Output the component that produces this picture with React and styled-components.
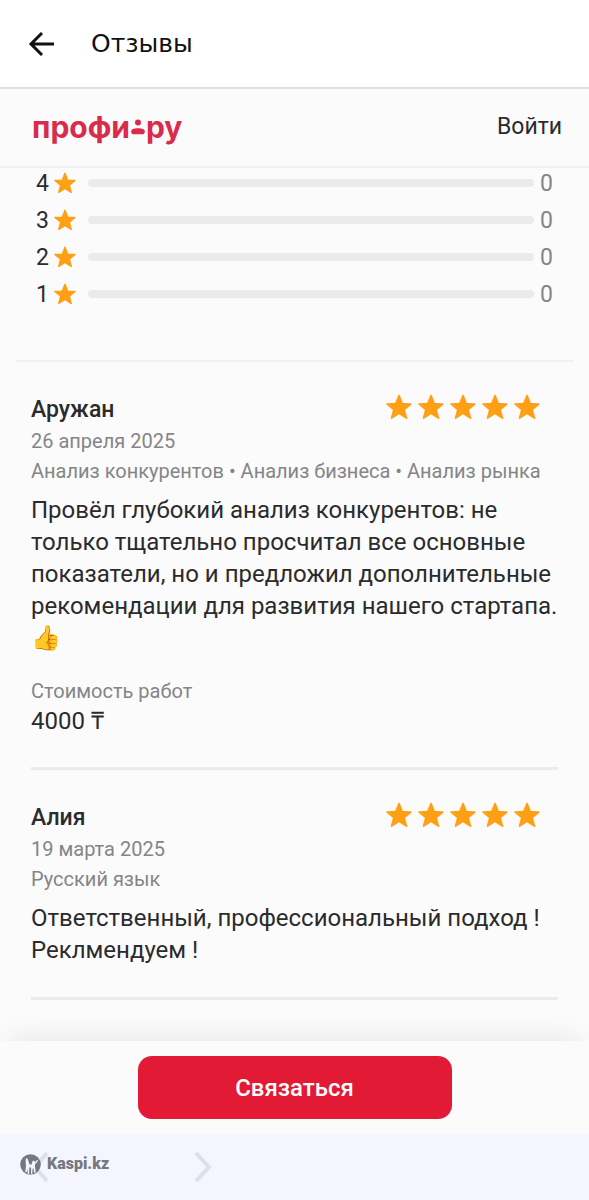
import React from "react"
import styled, { createGlobalStyle } from "styled-components"

const colors = {
  text: "#2b2b2d",
  muted: "#858587",
  star: "#ff9f14",
  red: "#e31a35",
  logo: "#d92b4b",
  page: "#fbfbfb",
  line: "#ebebeb",
}

const GlobalStyle = createGlobalStyle`
  * {
    box-sizing: border-box;
  }
  body {
    margin: 0;
    background: ${colors.page};
    color: ${colors.text};
    font-family: Roboto, "Liberation Sans", sans-serif;
  }
  h1, h2, p, ul, dl, dd {
    margin: 0;
    padding: 0;
  }
`

const Page = styled.div`
  display: flex;
  flex-direction: column;
  min-height: 100vh;
`

const AppBar = styled.header`
  display: flex;
  align-items: center;
  gap: 34px;
  height: 89px;
  padding: 0 26px;
  background: #fff;
  border-bottom: 2px solid #dddee2;
`

const IconButton = styled.button`
  display: flex;
  padding: 0;
  border: 0;
  background: none;
  color: #111;
  cursor: pointer;
`

const Title = styled.h1`
  font-family: "DejaVu Sans", sans-serif;
  font-size: 25px;
  font-weight: 400;
  line-height: 32px;
  color: #111;
`

const SiteHeader = styled.div`
  display: flex;
  justify-content: space-between;
  align-items: center;
  height: 79px;
  padding: 0 27px 2px 32px;
  border-bottom: 2px solid #f0f0f1;
`

const Logo = styled.a`
  display: flex;
  align-items: center;
  gap: 1px;
  font-family: Inter, sans-serif;
  font-size: 30px;
  font-weight: 700;
  line-height: 32px;
  color: ${colors.logo};
  text-decoration: none;
`

const LoginLink = styled.a`
  font-size: 23px;
  line-height: 32px;
  color: ${colors.text};
  text-decoration: none;
`

const Content = styled.main`
  flex: 1;
`

const Ratings = styled.ul`
  display: flex;
  flex-direction: column;
  gap: 7px;
  && {
    padding: 0 36px 51px;
  }
  list-style: none;
`

const RatingRow = styled.li`
  display: flex;
  align-items: center;
  height: 30px;
  font-size: 23px;
`

const RatingValue = styled.span`
  width: 18px;
`

const RatingTrack = styled.div`
  flex: 1;
  height: 8px;
  margin: 0 6px 0 12px;
  border-radius: 4px;
  background: ${colors.line};
  overflow: hidden;
`

const RatingFill = styled.div`
  height: 100%;
  background: ${colors.star};
`

const RatingCount = styled.span`
  color: ${colors.muted};
`

const Reviews = styled.section`
  margin: 0 16px;
  padding: 0 15px;
  border-top: 2px solid #f0f0f1;
`

const Review = styled.article`
  padding: 32px 0 31px;
  border-bottom: 3px solid ${colors.line};
`

const ReviewHead = styled.div`
  display: flex;
  justify-content: space-between;
  align-items: flex-start;
  padding-right: 18px;
`

const Author = styled.h2`
  font-size: 23px;
  font-weight: 500;
  line-height: 32px;
`

const Stars = styled.div`
  display: flex;
  gap: 6px;
`

const Meta = styled.p`
  font-size: 20px;
  line-height: 30px;
  color: ${colors.muted};
`

const Text = styled.p`
  margin-top: 8px;
  font-size: 24px;
  line-height: 32px;
`

const Price = styled.dl`
  margin-top: 22px;
`

const PriceLabel = styled.dt`
  font-size: 20px;
  line-height: 30px;
  color: ${colors.muted};
`

const PriceValue = styled.dd`
  font-size: 24px;
  line-height: 30px;
`

const Footer = styled.footer`
  position: sticky;
  bottom: 0;
`

const ActionBar = styled.div`
  display: flex;
  justify-content: center;
  padding: 15px 16px;
  background: ${colors.page};
  box-shadow: 0 -10px 30px -10px rgba(0, 0, 0, 0.1);
`

const ContactButton = styled.button`
  width: 314px;
  height: 63px;
  border: 0;
  border-radius: 14px;
  background: ${colors.red};
  color: #fff;
  font-family: inherit;
  font-size: 24px;
  font-weight: 500;
  cursor: pointer;
`

const BrowserBar = styled.nav`
  position: relative;
  display: flex;
  align-items: center;
  gap: 141px;
  height: 66px;
  padding: 0 32px;
  background: #f4f5fe;
`

const NavButton = styled(IconButton)`
  color: #dedfe8;
`

const Watermark = styled.div`
  position: absolute;
  left: 20px;
  top: 19px;
  display: flex;
  align-items: center;
  gap: 6px;
  font-size: 16px;
  font-weight: 900;
  line-height: 22px;
  color: #77787d;
`

function Star({ size }) {
  return (
    <svg width={size} height={size} viewBox="0 0 24 24" aria-hidden="true">
      <path
        d="M12 1.4 14.9 8.9 22.9 9.3 16.7 14.4 18.8 22.2 12 17.8 5.2 22.2 7.3 14.4 1.1 9.3 9.1 8.9Z"
        fill={colors.star}
        stroke={colors.star}
        strokeWidth="1.6"
        strokeLinejoin="round"
      />
    </svg>
  )
}

function BackIcon() {
  return (
    <svg width="31" height="30" viewBox="0 0 31 30" fill="none">
      <path
        d="M28 15H5M16 4 5 15l11 11"
        stroke="currentColor"
        strokeWidth="3"
      />
    </svg>
  )
}

function PersonMark() {
  return (
    <svg width="14" height="16" viewBox="0 0 14 16" aria-hidden="true">
      <circle cx="7" cy="3.5" r="3" fill="currentColor" />
      <path
        d="M.2 12.400C.2 10 2.500 9.200 7 9.200s6.800.8 6.800 3.200c0 1.900-1.100 2.900-2.800 2.900H3C1.300 15.300.2 14.300.2 12.400Z"
        fill="currentColor"
      />
    </svg>
  )
}

function Chevron({ direction }) {
  return (
    <svg width="20" height="34" viewBox="0 0 20 34" fill="none">
      <path
        d={direction === "left" ? "M15 3 3 17l12 14" : "M3 3l13 14L3 31"}
        stroke="currentColor"
        strokeWidth="4"
      />
    </svg>
  )
}

function KaspiMark() {
  return (
    <svg width="21" height="21" viewBox="0 0 21 21" aria-hidden="true">
      <circle cx="10.500" cy="10.500" r="10.300" fill="#77787d" />
      <path
        d="M6.600 4.200c1 0 1.500.8 1.200 1.700.9 1 1.300 2.600 1.500 4.300l2 .5.9-1.900c-.3-1 .2-1.900 1.100-2.100 1-.2 1.700.5 1.600 1.500l2.400-2.400.8.7-2.700 3.500c-.5.9-.5 2.100-.3 3.300l.6 5-1.400.8-.9-4.600-.8 0-.3 5.500-1.200.3 0-6.600-1.700-.4-.3 6.700-1.300-.3-.5-5.100-.8 4-1.600-1.100c.9-2.300 1.100-4.500 1-6.600 0-2.300-.8-6.500.7-6.700Z"
        fill="#f4f5fe"
      />
    </svg>
  )
}

const ratings = [
  { value: 4, count: 0 },
  { value: 3, count: 0 },
  { value: 2, count: 0 },
  { value: 1, count: 0 },
]

const reviews = [
  {
    author: "Аружан",
    date: "26 апреля 2025",
    services: "Анализ конкурентов • Анализ бизнеса • Анализ рынка",
    text: "Провёл глубокий анализ конкурентов: не только тщательно просчитал все основные показатели, но и предложил дополнительные рекомендации для развития нашего стартапа. 👍",
    price: "4000 ₸",
  },
  {
    author: "Алия",
    date: "19 марта 2025",
    services: "Русский язык",
    text: "Ответственный, профессиональный подход ! Реклмендуем !",
  },
]

function ReviewItem({ author, date, services, text, price }) {
  return (
    <Review>
      <ReviewHead>
        <Author>{author}</Author>
        <Stars role="img" aria-label="5">
          {[1, 2, 3, 4, 5].map((n) => (
            <Star key={n} size={26} />
          ))}
        </Stars>
      </ReviewHead>
      <Meta>{date}</Meta>
      <Meta>{services}</Meta>
      <Text>{text}</Text>
      {price ? (
        <Price>
          <PriceLabel>Стоимость работ</PriceLabel>
          <PriceValue>{price}</PriceValue>
        </Price>
      ) : null}
    </Review>
  )
}

export default function App() {
  return (
    <Page>
      <GlobalStyle />
      <AppBar>
        <IconButton type="button" aria-label="Назад">
          <BackIcon />
        </IconButton>
        <Title>Отзывы</Title>
      </AppBar>
      <SiteHeader>
        <Logo href="#">
          <span>профи</span>
          <PersonMark />
          <span>ру</span>
        </Logo>
        <LoginLink href="#">Войти</LoginLink>
      </SiteHeader>
      <Content>
        <Ratings>
          {ratings.map(({ value, count }) => (
            <RatingRow key={value}>
              <RatingValue>{value}</RatingValue>
              <Star size={22} />
              <RatingTrack>
                <RatingFill style={{ width: `${count}%` }} />
              </RatingTrack>
              <RatingCount>{count}</RatingCount>
            </RatingRow>
          ))}
        </Ratings>
        <Reviews>
          {reviews.map((review) => (
            <ReviewItem key={review.author} {...review} />
          ))}
        </Reviews>
      </Content>
      <Footer>
        <ActionBar>
          <ContactButton type="button">Связаться</ContactButton>
        </ActionBar>
        <BrowserBar>
          <NavButton type="button" aria-label="Назад">
            <Chevron direction="left" />
          </NavButton>
          <NavButton type="button" aria-label="Вперёд">
            <Chevron direction="right" />
          </NavButton>
          <Watermark>
            <KaspiMark />
            <span>Kaspi.kz</span>
          </Watermark>
        </BrowserBar>
      </Footer>
    </Page>
  )
}
